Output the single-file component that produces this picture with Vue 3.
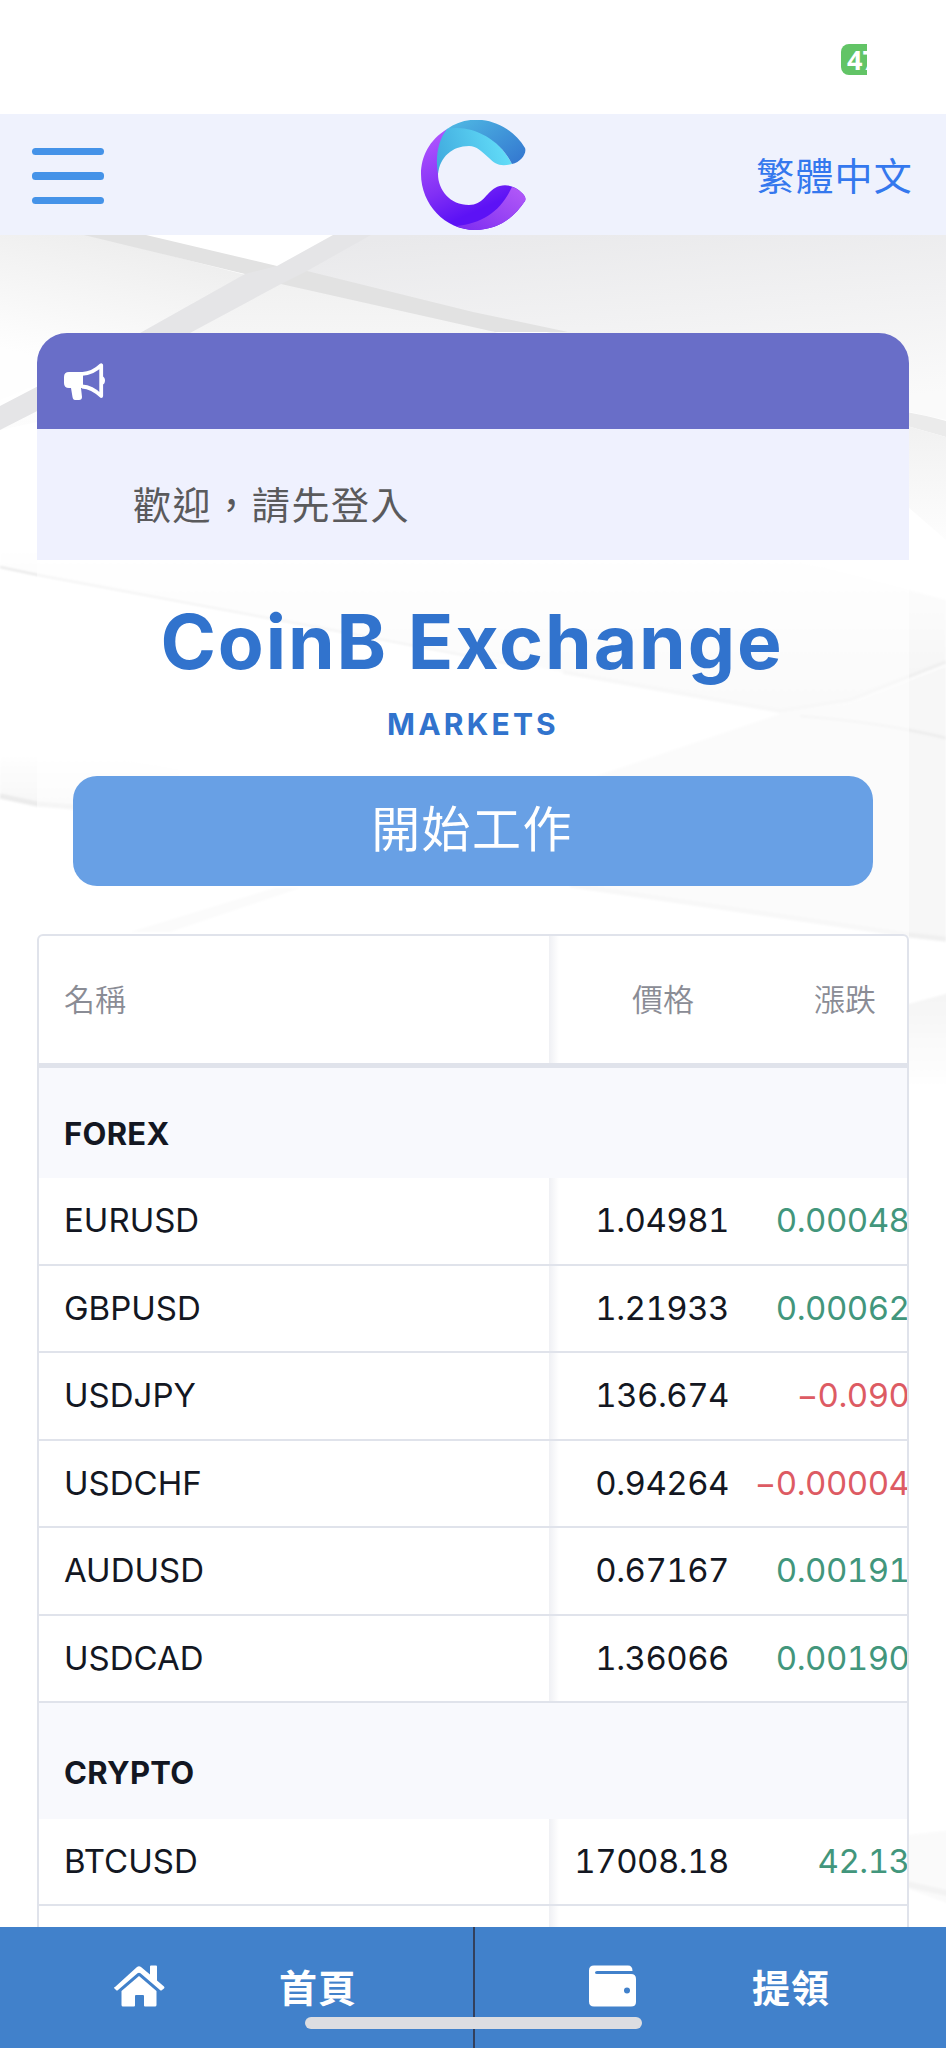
<script setup>
const groups = [
  {
    name: 'FOREX',
    rows: [
      { name: 'EURUSD', price: '1.04981', change: '0.00048' },
      { name: 'GBPUSD', price: '1.21933', change: '0.00062' },
      { name: 'USDJPY', price: '136.674', change: '−0.090' },
      { name: 'USDCHF', price: '0.94264', change: '−0.00004' },
      { name: 'AUDUSD', price: '0.67167', change: '0.00191' },
      { name: 'USDCAD', price: '1.36066', change: '0.00190' },
    ],
  },
  {
    name: 'CRYPTO',
    rows: [
      { name: 'BTCUSD', price: '17008.18', change: '42.13' },
      { name: '', price: '', change: '' },
    ],
  },
]
</script>

<template>
  <div class="screen">
    <svg class="backdrop" width="946" height="2048" viewBox="0 0 946 2048" aria-hidden="true">
      <defs>
        <linearGradient id="gl" x1="0.6" y1="0" x2="0.3" y2="0.8"><stop offset="0" stop-color="#ececec" /><stop offset="1" stop-color="#fefefe" /></linearGradient>
        <linearGradient id="gr" x1="0.2" y1="0" x2="0.5" y2="1"><stop offset="0" stop-color="#e9e9eb" /><stop offset="1" stop-color="#fafafa" /></linearGradient>
        <linearGradient id="gm" x1="0" y1="0" x2="0" y2="1"><stop offset="0" stop-color="#f1f1f1" /><stop offset="1" stop-color="#fdfdfd" /></linearGradient>
        <linearGradient id="gd" x1="0" y1="0" x2="0" y2="1"><stop offset="0.2" stop-color="#fff" /><stop offset="1" stop-color="#f4f4f4" /></linearGradient>
        <linearGradient id="gu" x1="0" y1="0" x2="0" y2="1"><stop offset="0" stop-color="#f4f4f4" /><stop offset="1" stop-color="#fff" /></linearGradient>
        <filter id="soft"><feGaussianBlur stdDeviation="1.2" /></filter>
      </defs>
      <rect width="946" height="2048" fill="#fff" />
      <path d="M0 235H90L281 284L0 400Z" fill="url(#gl)" />
      <path d="M360 235H946V420L560 335L290 275Z" fill="url(#gr)" />
      <path d="M281 280L473 325L800 430H0Z" fill="url(#gm)" />
      <path d="M0 430L140 400L60 560H0Z" fill="#fff" />
      <path d="M84 235H146L277 266L307 271L473 312L568 332H495L281 284L245 274Z" fill="#e2e2e2" />
      <path d="M333 235H371L307 271L281 284L190 333L0 430V406L140 333L245 274L277 266Z" fill="#e5e5e7" />
      <path d="M900 411Q925 415 946 421V437L900 424Z" fill="#ebebeb" />
      <path d="M900 424L946 437V540L900 500Z" fill="url(#gm)" />
      <g filter="url(#soft)">
        <path d="M0 500H430Q620 545 800 560L946 600V662L850 701L780 711L563 672L300 623L43 575L0 566Z" fill="url(#gd)" />
        <path d="M0 567L43 576L300 624L520 666" fill="none" stroke="#e6e6e6" stroke-width="2" />
        <path d="M0 735Q70 747 180 770V822L73 810L0 797Z" fill="url(#gd)" />
        <path d="M0 796L37 804L150 813" fill="none" stroke="#ebebeb" stroke-width="5" />
        <path d="M130 932L275 888L300 888L170 932Z" fill="#f6f6f6" />
        <path d="M563 672L780 711L850 700L946 662" fill="none" stroke="#f0f0f0" stroke-width="4" />
        <path d="M596 776L785 712L850 703L946 666V942L909 936L570 885Z" fill="#f7f7f7" />
        <path d="M800 716Q880 722 946 738" fill="none" stroke="#eee" stroke-width="3" />
        <path d="M570 885L909 935L946 939" fill="none" stroke="#f0f0f0" stroke-width="5" />
        <path d="M880 1012L960 990V1090H880Z" fill="url(#gu)" />
        <path d="M880 1838L960 1829V1908L880 1878Z" fill="#fafafa" />
        <path d="M880 1878L960 1896" fill="none" stroke="#f3f3f3" stroke-width="6" />
      </g>
    </svg>

    <div class="status"><div class="battery"><span>47</span></div></div>

    <header class="topbar">
      <button class="menu" aria-label="menu"><i></i><i></i><i></i></button>
      <svg class="logo" viewBox="0 0 105 110" aria-hidden="true">
        <defs>
          <linearGradient id="lp" x1="0.2" y1="0" x2="0.65" y2="1"><stop offset="0" stop-color="#b055ff" /><stop offset="0.5" stop-color="#8230f5" /><stop offset="0.8" stop-color="#5c12f5" /></linearGradient>
          <linearGradient id="lq" x1="1" y1="0" x2="0" y2="1"><stop offset="0" stop-color="#b45bf8" /><stop offset="1" stop-color="#7c2cf0" /></linearGradient>
          <linearGradient id="lc" x1="0" y1="1" x2="1" y2="0.8"><stop offset="0" stop-color="#3fa8dd" /><stop offset="1" stop-color="#62ddf8" /></linearGradient>
          <linearGradient id="lb" x1="0" y1="0" x2="1" y2="0.8"><stop offset="0" stop-color="#50bbe4" /><stop offset="1" stop-color="#357bd1" /></linearGradient>
        </defs>
        <path d="M26 9C8 20 0 37 0 54C0 84 24 110 54 110C76 110 92 99 104 81C105 78 104 76 101 73C94 65 82 63 74 68C65 73 62 85 48 85C29 85 17 70 17 54L18 35Z" fill="url(#lp)" />
        <path d="M104 81C92 99 76 110 54 110C47 110 40 108 35 106C62 103 79 92 91 67Q96 68 101 73Q106 78 104 81Z" fill="url(#lq)" />
        <path d="M17 54C14 38 17 20 26 9C43 3 73 10 91 44C79 47 74 44 68 38C60 31 56 26 48 26C31 26 19 37 17 54Z" fill="url(#lc)" />
        <path d="M26 9C51 -9 87 0 104 28C106 33 100 42 91 44C78 17 48 4 26 9Z" fill="url(#lb)" />
      </svg>
      <a class="lang">繁體中文</a>
    </header>

    <main class="content">
      <section class="notice">
        <div class="notice-head">
          <svg viewBox="0 0 41 37" aria-hidden="true">
            <path d="M5 9H19V25H17L18 34Q18 37 15 37H11Q9 37 8.500 34L7 25H5Q0 25 0 20V14Q0 9 5 9Z" fill="#fff" />
            <path d="M18 10.800Q28 11 37.200 2.200V33Q28 24 18 23.500" fill="none" stroke="#fff" stroke-width="3.800" stroke-linejoin="round" />
            <path d="M38 13Q41 14 41 17.500Q41 21 38 22Z" fill="#fff" />
          </svg>
        </div>
        <p>歡迎，請先登入</p>
      </section>

      <section class="panel">
        <h1>CoinB Exchange</h1>
        <h2>MARKETS</h2>
        <button class="start">開始工作</button>

        <div class="market">
          <div class="row head">
            <div class="name">名稱</div>
            <div class="price">價格</div>
            <div class="change">漲跌</div>
          </div>
          <template v-for="g in groups" :key="g.name">
            <div class="group" :class="g.name.toLowerCase()">{{ g.name }}</div>
            <div v-for="r in g.rows" :key="r.name" class="row">
              <div class="name">{{ r.name }}</div>
              <div class="price">{{ r.price }}</div>
              <div class="change" :class="r.change.startsWith('−') ? 'down' : 'up'">{{ r.change }}</div>
            </div>
          </template>
        </div>
      </section>
    </main>

    <nav class="tabs">
      <a class="tab">
        <svg class="home" viewBox="0 0 52 42" aria-hidden="true">
          <path d="M2 22L24 2Q26 .5 28 2L37 9.500V1.500Q37 .5 38 .5H43Q44 .5 44 1.500V15.500L51 21.500Q52 22.500 51 23.500L49 25Q48 26 47 25L27.500 8.300Q26 7 24.500 8.300L5 25Q4 26 3 25L1 23Q.5 22.500 2 22Z" fill="#fff" />
          <path d="M26 11L43.500 26V40Q43.500 41.500 42 41.500H32Q31 41.500 31 40.500V31Q31 30 30 30H23Q22 30 22 31V40.500Q22 41.500 21 41.500H10Q8.500 41.500 8.500 40V26Z" fill="#fff" />
        </svg>
        <span>首頁</span>
      </a>
      <a class="tab">
        <svg class="wallet" viewBox="0 0 47 42" aria-hidden="true">
          <path fill-rule="evenodd" d="M5 .5H39Q43.500 .5 43.500 6H8Q6 6 6 7.500Q6 9 8 9H42Q47 9 47 14V37Q47 41.500 42 41.500H5Q0 41.500 0 36.500V5.500Q0 .5 5 .5ZM38 22.500A3 3 0 1 0 38 28.500A3 3 0 1 0 38 22.500Z" fill="#fff" />
        </svg>
        <span>提領</span>
      </a>
      <div class="indicator"></div>
    </nav>
  </div>
</template>

<style>
body { margin: 0; background: #fff; }
</style>

<style scoped>
.screen {
  position: relative;
  width: 946px;
  height: 2048px;
  overflow: hidden;
  display: flex;
  flex-direction: column;
  font-family: Inter, "Noto Sans CJK TC", sans-serif;
  color: #131722;
}
.screen * { box-sizing: border-box; }
.backdrop { position: absolute; inset: 0; }
.status, .topbar, .content, .tabs { position: relative; flex: none; }
.status { height: 114px; background: #fff; padding: 44px 0 0 841px; }
.battery {
  width: 26px;
  height: 31px;
  overflow: hidden;
  background: #62c466;
  border-radius: 8px 0 0 8px;
  color: #fff;
  font: 700 27px/31px "Noto Sans", sans-serif;
  padding-left: 6px;
}
.topbar {
  height: 121px;
  background: #eff2fd;
  display: grid;
  grid-template-columns: 1fr 105px 1fr;
  align-items: center;
  padding: 0 33px 0 32px;
}
.menu {
  border: 0;
  padding: 0;
  background: none;
  width: 72px;
  display: flex;
  flex-direction: column;
  gap: 17px;
  margin-top: 3px;
}
.menu i { height: 7.3px; border-radius: 3.5px; background: #4593e8; }
.logo { width: 105px; height: 110px; margin: 1px 0 0 1px; }
.lang {
  justify-self: end;
  font-weight: 400;
  font-size: 38px;
  letter-spacing: 1.2px;
  margin: -2px 0 0 0;
  color: #3478ee;
}
.content {
  height: 1691.5px;
  overflow: hidden;
  padding: 97.5px 37px 0;
}
.notice-head {
  height: 96.5px;
  border-radius: 30px 30px 0 0;
  background: #696ec8;
  padding: 30px 27px;
}
.notice-head svg { display: block; width: 41px; height: 37px; }
.notice p {
  margin: 0;
  height: 131px;
  background: #eff1fe;
  padding: 21px 96px 0;
  line-height: 111px;
  font-weight: 400;
  font-size: 38px;
  letter-spacing: 1.6px;
  color: #5a5a5c;
}
.panel { background: rgba(255, 255, 255, 0.5); padding-top: 34px; }
h1 {
  margin: 0 2px 0 0;
  text-align: center;
  font-size: 75px;
  line-height: 96px;
  font-weight: 700;
  letter-spacing: 1.9px;
  color: #3173cd;
}
h2 {
  margin: 14px 0 0;
  text-align: center;
  font-size: 30px;
  line-height: 40px;
  font-weight: 700;
  letter-spacing: 3.2px;
  color: #3173cd;
}
.start {
  display: block;
  width: 800px;
  height: 109.5px;
  margin: 32px 36px 48.500px;
  border: 0;
  border-radius: 24px;
  background: #68a0e5;
  color: #fff;
  font: 400 49px/1 Inter, "Noto Sans CJK TC", sans-serif;
  letter-spacing: 1.4px;
  padding: 0 2px 2px 0;
}
.market {
  border: 2px solid #e0e3eb;
  border-radius: 6px 6px 0 0;
  background: #fff;
  overflow: hidden;
}
.row {
  display: grid;
  grid-template-columns: 510px 182px 182px;
  height: 87.5px;
  border-bottom: 2px solid #e0e3eb;
  font-size: 33px;
  line-height: 85px;
  font-variant-numeric: tabular-nums;
}
.row.head {
  height: 132px;
  border-bottom: 5px solid #e0e3eb;
  line-height: 127px;
  font-size: 31px;
  font-weight: 350;
  color: #8a8c95;
}
.name { padding-left: 25px; }
.price {
  text-align: right;
  padding-right: 2px;
  letter-spacing: -0.5px;
  background: linear-gradient(90deg, #eff0f4, #fff 10px);
}
.head .price { padding-right: 37px; letter-spacing: 0; }
.head .change { padding-right: 37px; letter-spacing: 0; }
.change { text-align: right; white-space: nowrap; padding-right: 3.5px; letter-spacing: -0.5px; }
.up { color: #42967c; }
.down { color: #dd5b63; }
.group {
  height: 110px;
  background: #f8f9fd;
  padding: 46px 0 0 25px;
  font-size: 31px;
  line-height: 40px;
  font-weight: 700;
  letter-spacing: 0.3px;
}
.group.crypto { height: 115.5px; padding-top: 50px; }
.tabs {
  height: 121.5px;
  background: #4181cb;
  display: grid;
  grid-template-columns: 1fr 1fr;
}
.tab { display: flex; height: 121px; align-items: flex-start; padding-top: 38px; }
.tab + .tab { border-left: 2px solid #33405c; }
.tab span {
  color: #fff;
  font-weight: 700;
  font-size: 38px;
  line-height: 46px;
  letter-spacing: 1px;
}
.home { width: 52px; height: 42px; margin: 0 114px 0 113px; }
.wallet { width: 47px; height: 42px; margin: 0 116px 0 114px; }
.indicator {
  position: absolute;
  left: 305px;
  top: 90px;
  width: 337px;
  height: 12.5px;
  border-radius: 7px;
  background: #dcdde1;
}
</style>
